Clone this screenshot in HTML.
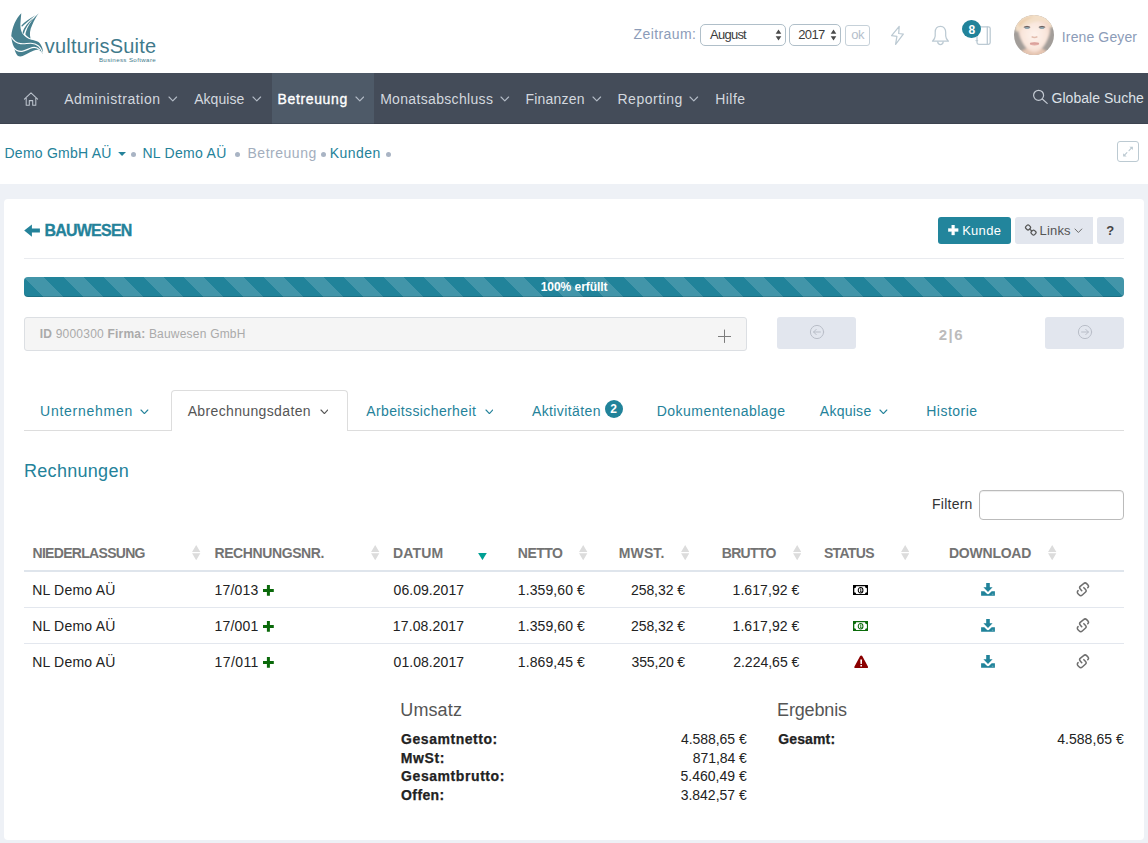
<!DOCTYPE html>
<html lang="de">
<head>
<meta charset="utf-8">
<title>vulturisSuite – Kunden – Bauwesen</title>
<style>
html,body{margin:0;padding:0}
body{width:1148px;height:843px;position:relative;overflow:hidden;background:#eef1f6;
 font-family:"Liberation Sans",sans-serif;font-size:14px;color:#333}
.a{position:absolute}
.t{position:absolute;white-space:pre;line-height:20px}
.t b{font-weight:700}
#top{left:0;top:0;width:1148px;height:73px;background:#fff}
#nav{left:0;top:73px;width:1148px;height:51px;background:#444c59;box-shadow:inset 0 -1px 0 #3c434f}
#navact{left:272px;top:73px;width:102px;height:51px;background:#4e5a68;box-shadow:inset 0 -1px 0 #434d5a}
#crumb{left:0;top:124px;width:1148px;height:60px;background:#fff}
#panel{left:4px;top:199px;width:1140px;height:641px;background:#fff;border-radius:4px}
.dot{position:absolute;width:5px;height:5px;border-radius:50%;background:#a9b4c4;top:152px}
.sel{position:absolute;top:24px;height:22px;box-sizing:border-box;border:1px solid #b0bfc9;border-radius:5px;background:#fff}
.btn{position:absolute;border-radius:3px}
.hr{position:absolute;height:1px;background:#e9ebef}
.sep{position:absolute;left:24px;width:1100px;height:1px;background:#e3e7ee}
</style>
</head>
<body>
<div id="top" class="a"></div>
<div id="nav" class="a"></div>
<div id="navact" class="a"></div>
<div id="crumb" class="a"></div>
<div id="panel" class="a"></div>

<!-- header controls -->
<div class="sel" style="left:699.5px;width:86.5px"></div>
<div class="sel" style="left:789px;width:52px"></div>
<div class="a" style="left:845px;top:25px;width:25px;height:21px;box-sizing:border-box;border:1px solid #c6d1d9;border-radius:3px"></div>

<!-- breadcrumb dots + expand button -->
<div class="dot" style="left:131.3px"></div><div class="dot" style="left:235.2px"></div>
<div class="dot" style="left:321.3px"></div><div class="dot" style="left:385.6px"></div>
<div class="a" style="left:1117px;top:141px;width:22px;height:21px;box-sizing:border-box;border:1px solid #bccad2;border-radius:3px"></div>

<!-- panel header -->
<div class="btn" style="left:938px;top:217px;width:73px;height:27px;background:#22859c"></div>
<div class="btn" style="left:1015px;top:217px;width:78px;height:27px;background:#e2e6ee;border-radius:3px 0 0 3px"></div>
<div class="btn" style="left:1097px;top:217px;width:27px;height:27px;background:#e2e6ee"></div>
<div class="hr" style="left:24px;top:258px;width:1100px"></div>

<!-- progress -->
<div class="a" id="prog" style="left:24px;top:277px;width:1100px;height:20px;border-radius:4px;background-color:#21839a;
 background-image:linear-gradient(45deg,rgba(255,255,255,.15) 25%,transparent 25%,transparent 50%,rgba(255,255,255,.15) 50%,rgba(255,255,255,.15) 75%,transparent 75%,transparent);
 background-size:40px 40px;background-position:0 0;box-shadow:inset 0 -1px 0 rgba(0,0,0,.15)"></div>

<!-- search box + pager -->
<div class="a" style="left:24px;top:317px;width:723px;height:34px;box-sizing:border-box;background:#f5f5f5;border:1px solid #dcdfe3;border-radius:3px"></div>
<div class="btn" style="left:777px;top:317px;width:79px;height:32px;background:#e2e6ee"></div>
<div class="btn" style="left:1045px;top:317px;width:79px;height:32px;background:#e2e6ee"></div>

<!-- tabs -->
<div class="a" style="left:24px;top:430px;width:1100px;height:1px;background:#ddd"></div>
<div class="a" style="left:171px;top:390px;width:177px;height:41px;box-sizing:border-box;border:1px solid #ddd;border-bottom:none;border-radius:4px 4px 0 0;background:#fff"></div>
<div class="a" style="left:605px;top:400px;width:18px;height:18px;border-radius:50%;background:#21839a"></div>

<!-- filter -->
<div class="a" style="left:979px;top:490px;width:145px;height:30px;box-sizing:border-box;border:1px solid #bbb;border-radius:4px;background:#fff;box-shadow:inset 0 1px 1px rgba(0,0,0,.075)"></div>

<!-- table lines -->
<div class="a" style="left:24px;top:570px;width:1100px;height:2px;background:#dfe5ec"></div>
<div class="sep" style="top:607px"></div>
<div class="sep" style="top:643px"></div>

<svg class="a" style="left:10px;top:12px;" width="35" height="46" viewBox="0 0 35 46"><g fill="#47808f"><path d="M11.3 1.3 C5.5 7 2.2 15.5 1.3 23.5 C1.4 28.5 2.6 32.2 3.9 34.8 C4.6 38.4 5.8 41.6 7.4 43.5 C9 44.6 11 44.6 12.6 44 C15.5 43 18 41.2 20.5 40 C23 38.8 25.6 37.6 27.8 37.8 C29.8 38.2 31.4 39.6 32.7 41.8 C33 39 32.8 36.6 31.8 34.8 C30.8 32.2 29.4 30.6 27.5 29.6 C25.6 28.6 23.5 28.2 21.4 27.8 C19.4 27.2 17.6 26.4 16.1 25.2 C13.6 23.4 12 21.4 11.3 19.1 C10.4 16 10.2 13 10.5 10.4 C10.7 7.2 11 4.2 11.3 1.3Z"/><path d="M28.8 1.3 C23.6 6 19.8 11 17.4 16 C16.4 18.4 15.6 20.6 15.4 22.6 C16.8 24.4 18.6 25.8 20.5 26.5 C19.4 22.4 19.8 17.6 22.2 13 C24 8.6 26.2 4.6 28.8 1.3Z"/><path d="M25.4 3.2 C19.6 6.2 14.8 10 11.4 13.4 C11.6 14 11.8 14.4 12 14.8 C15.4 11.6 20 7.4 25.4 3.2Z"/><path d="M23.8 6 C18.2 10 14 15.4 12.6 20.4 C12.9 21 13.3 21.5 13.7 22 C15 17 18.8 11 23.8 6Z"/></g><g fill="none" stroke="#fff" stroke-linecap="round"><path d="M1.6 25.2 C3.6 29 7 31.2 10.6 31.6 C14.4 32 17.6 31.2 20.8 31.3 C24 31.4 26.6 32.4 28.6 34 C30.4 35.6 31.6 37.6 32.4 40.4" stroke-width="1.1"/><path d="M3.6 35.6 C6 38.6 9 39.6 12 39.3 C15.6 38.9 18.6 36.6 22.2 35.7 C25.2 35 27.6 35.8 29.6 37.8" stroke-width="1.2"/></g></svg>
<svg class="a" style="left:774.7px;top:29px;" width="7" height="12" viewBox="0 0 7 12"><path d="M3.5 0.4 L6.3 4.8 H0.7Z M3.5 11.6 L6.3 7.3 H0.7Z" fill="#4a4a4a"/></svg>
<svg class="a" style="left:829.8px;top:29px;" width="7" height="12" viewBox="0 0 7 12"><path d="M3.5 0.4 L6.3 4.8 H0.7Z M3.5 11.6 L6.3 7.3 H0.7Z" fill="#4a4a4a"/></svg>
<svg class="a" style="left:890px;top:25px;" width="16" height="22" viewBox="0 0 16 22"><path d="M9.2 1.4 L1.6 10.7 L6.9 11.4 L5.6 19.4 L13.3 9.1 L8.7 8.5 Z" fill="none" stroke="#bccad3" stroke-width="1.25" stroke-linejoin="round"/></svg>
<svg class="a" style="left:931px;top:25px;" width="19" height="22" viewBox="0 0 19 22"><g fill="none" stroke="#bccad3" stroke-width="1.25" stroke-linejoin="round" stroke-linecap="round"><path d="M9.45 1.4 C6 1.4 4.2 3.8 4.2 7.5 V11 C4.2 13 3 14.6 1.5 16.2 H17.4 C15.9 14.6 14.7 13 14.7 11 V7.5 C14.7 3.8 12.9 1.4 9.45 1.4Z"/><path d="M6.7 16.9 C6.9 18.6 8 19.5 9.45 19.5 C10.9 19.5 12 18.6 12.2 16.9"/></g></svg>
<svg class="a" style="left:974px;top:25px;" width="18" height="21" viewBox="0 0 18 21"><g fill="none" stroke="#bccad3" stroke-width="1.3" stroke-linejoin="round" stroke-linecap="round"><rect x="3" y="1.8" width="13.2" height="17.6" rx="1.8"/><path d="M13.3 1.8 V19.4 M2 15.6 H3.6"/></g></svg>
<div class="a" style="left:962px;top:19.5px;width:19px;height:18.5px;border-radius:50%;background:#21839a"></div>
<svg class="a" style="left:1014px;top:15px;" width="40" height="40" viewBox="0 0 40 40"><defs><clipPath id="avc"><circle cx="20" cy="20" r="20"/></clipPath><filter id="avb" x="-30%" y="-30%" width="160%" height="160%"><feGaussianBlur stdDeviation="1.0"/></filter><filter id="avb2" x="-30%" y="-30%" width="160%" height="160%"><feGaussianBlur stdDeviation="0.55"/></filter><radialGradient id="avf" cx="50%" cy="50%" r="55%"><stop offset="0" stop-color="#fef3ed"/><stop offset="0.7" stop-color="#f9e6dc"/><stop offset="1" stop-color="#f0d3c4"/></radialGradient></defs><g clip-path="url(#avc)"><rect width="40" height="40" fill="#a29d99"/><g filter="url(#avb)"><path d="M-2 -2 H42 V13 C39 11.5 37 11.5 36 13 L4 13 C3 11.5 1 11.5 -2 13Z" fill="#f0dcc6"/><path d="M2 44 C5 37 9 34.5 13 33.5 L27 33.5 C31 34.5 35 37 38 44Z" fill="#e6c6b2"/><path d="M20 3 C30 3 36.4 8 36.2 15 C35.6 21 33 26.5 30 31 C27.5 34.6 24 37.4 20.3 37.4 C16.6 37.4 13 34.6 10.5 31 C7.5 26.5 4.8 21 4.3 15 C4 8 10 3 20 3Z" fill="url(#avf)"/><path d="M1 15 C2 6 9 0 19 -1 C28 -1.5 35 2 38 10 C33 6.5 28 5.5 23 6.5 C16 8 10 10.5 6 15 C4.5 17 3 17.5 1 15Z" fill="#f3dfc8"/><path d="M4 9 C8 4 14 1.5 20 1.5 C14 4 9 7 5.5 12Z" fill="#ebcdab"/></g><g filter="url(#avb2)"><ellipse cx="13.1" cy="12.7" rx="2.7" ry="1.25" fill="#8ea3ad"/><ellipse cx="27.9" cy="12.7" rx="2.7" ry="1.25" fill="#8ea3ad"/><path d="M9.8 12.2 Q13 10.4 16.2 12.2 M24.8 12.2 Q28 10.4 31.2 12.2" stroke="#5e4f4c" stroke-width="0.9" fill="none"/><path d="M17.6 21.6 Q20.5 23.4 23.4 21.6" stroke="#e2bdae" stroke-width="1.4" fill="none"/><ellipse cx="20.5" cy="28.8" rx="4.7" ry="1.7" fill="#e3aca6"/><path d="M16 28.3 Q20.5 29.3 25 28.3" stroke="#cf958f" stroke-width="0.5" fill="none"/></g></g></svg>
<svg class="a" style="left:23px;top:91px;" width="16" height="16" viewBox="0 0 16 16"><path d="M1.4 8.2 L8 1.8 L14.6 8.2 M3.2 7 V14.3 H6.3 V9.6 H9.7 V14.3 H12.8 V7" fill="none" stroke="#bcc3cd" stroke-width="1.05" stroke-linejoin="round" stroke-linecap="round"/></svg>
<svg class="a" style="left:167.95px;top:96.2px;" width="9.6" height="5.8" viewBox="0 0 9.6 5.8"><path d="M1 1 L4.8 4.8 L8.6 1" fill="none" stroke="#b3bbc6" stroke-width="1.15" stroke-linecap="round" stroke-linejoin="round"/></svg>
<svg class="a" style="left:252.45px;top:96.2px;" width="9.6" height="5.8" viewBox="0 0 9.6 5.8"><path d="M1 1 L4.8 4.8 L8.6 1" fill="none" stroke="#b3bbc6" stroke-width="1.15" stroke-linecap="round" stroke-linejoin="round"/></svg>
<svg class="a" style="left:354.7px;top:96.2px;" width="9.6" height="5.8" viewBox="0 0 9.6 5.8"><path d="M1 1 L4.8 4.8 L8.6 1" fill="none" stroke="#b3bbc6" stroke-width="1.15" stroke-linecap="round" stroke-linejoin="round"/></svg>
<svg class="a" style="left:500.45px;top:96.2px;" width="9.6" height="5.8" viewBox="0 0 9.6 5.8"><path d="M1 1 L4.8 4.8 L8.6 1" fill="none" stroke="#b3bbc6" stroke-width="1.15" stroke-linecap="round" stroke-linejoin="round"/></svg>
<svg class="a" style="left:592.45px;top:96.2px;" width="9.6" height="5.8" viewBox="0 0 9.6 5.8"><path d="M1 1 L4.8 4.8 L8.6 1" fill="none" stroke="#b3bbc6" stroke-width="1.15" stroke-linecap="round" stroke-linejoin="round"/></svg>
<svg class="a" style="left:689.2px;top:96.2px;" width="9.6" height="5.8" viewBox="0 0 9.6 5.8"><path d="M1 1 L4.8 4.8 L8.6 1" fill="none" stroke="#b3bbc6" stroke-width="1.15" stroke-linecap="round" stroke-linejoin="round"/></svg>
<svg class="a" style="left:1032px;top:89px;" width="17" height="16" viewBox="0 0 17 16"><g fill="none" stroke="#c3c9d2" stroke-width="1.2" stroke-linecap="round"><circle cx="6.6" cy="6.3" r="5"/><path d="M10.3 10 L15.2 14.4"/></g></svg>
<svg class="a" style="left:118px;top:152px;" width="8" height="4.2" viewBox="0 0 8 4.2"><path d="M0.1 0 H8 L4.05 4Z" fill="#24829a"/></svg>
<svg class="a" style="left:1121px;top:145px;" width="14" height="13" viewBox="0 0 14 13"><g fill="#bccad2" stroke="#bccad2" stroke-width="1.1" stroke-linecap="round"><path d="M8.4 1.7 H11.9 V5.1Z" stroke="none"/><path d="M8 5.6 L10.6 2.9" fill="none"/><path d="M2.1 8.2 V11.5 H5.6Z" stroke="none"/><path d="M3.3 10.4 L5.9 7.7" fill="none"/></g></svg>
<svg class="a" style="left:24px;top:224px;" width="17" height="14" viewBox="0 0 17 14"><path d="M0.2 6.5 L7.9 0.4 V4.6 H15.9 V8.6 H7.9 V12.7 Z" fill="#24829a"/></svg>
<svg class="a" style="left:948px;top:224.8px;" width="11" height="11" viewBox="0 0 11 11"><path d="M3.7 0.1 H6.6 V3.6 H10.2 V6.5 H6.6 V10 H3.7 V6.5 H0.2 V3.6 H3.7Z" fill="#fff" stroke="#fff" stroke-width="0.3" stroke-linejoin="round"/></svg>
<svg class="a" style="left:1024px;top:224px;" width="14" height="12" viewBox="0 0 14 12"><g fill="none" stroke="#555" stroke-width="1.25"><rect x="1.85" y="1.2" width="4.4" height="4.4" rx="1.5" transform="rotate(45 4.05 3.4)"/><rect x="7.33" y="6.42" width="4.4" height="4.4" rx="1.5" transform="rotate(45 9.53 8.62)"/><path d="M5.8 5.1 L7.8 7"/></g></svg>
<svg class="a" style="left:1074.4px;top:227.7px;" width="8.8" height="5.5" viewBox="0 0 8.8 5.5"><path d="M1 1 L4.4 4.5 L7.8 1" fill="none" stroke="#666" stroke-width="0.95" stroke-linecap="round" stroke-linejoin="round"/></svg>
<svg class="a" style="left:717px;top:328px;" width="16" height="16" viewBox="0 0 16 16"><path d="M7.5 1.6 V14.9 M1 8.5 H14" stroke="#7c7c7c" stroke-width="1" fill="none"/></svg>
<svg class="a" style="left:809px;top:324px;" width="16" height="16" viewBox="0 0 16 16"><g fill="none" stroke="#b9bec8" stroke-width="1" stroke-linecap="round" stroke-linejoin="round"><circle cx="8" cy="8" r="6.6"/><path d="M4.6 8 H11.4 M7.2 5.4 L4.6 8 L7.2 10.6"/></g></svg>
<svg class="a" style="left:1076.5px;top:324px;" width="16" height="16" viewBox="0 0 16 16"><g fill="none" stroke="#b9bec8" stroke-width="1" stroke-linecap="round" stroke-linejoin="round"><circle cx="8" cy="8" r="6.6"/><path d="M4.6 8 H11.4 M8.8 5.4 L11.4 8 L8.8 10.6"/></g></svg>
<svg class="a" style="left:140.35px;top:408.6px;" width="8.8" height="5.6" viewBox="0 0 8.8 5.6"><path d="M1 1 L4.4 4.6 L7.8 1" fill="none" stroke="#24829a" stroke-width="1.15" stroke-linecap="round" stroke-linejoin="round"/></svg>
<svg class="a" style="left:319.6px;top:408.6px;" width="8.8" height="5.6" viewBox="0 0 8.8 5.6"><path d="M1 1 L4.4 4.6 L7.8 1" fill="none" stroke="#555" stroke-width="1.15" stroke-linecap="round" stroke-linejoin="round"/></svg>
<svg class="a" style="left:484.6px;top:408.6px;" width="8.8" height="5.6" viewBox="0 0 8.8 5.6"><path d="M1 1 L4.4 4.6 L7.8 1" fill="none" stroke="#24829a" stroke-width="1.15" stroke-linecap="round" stroke-linejoin="round"/></svg>
<svg class="a" style="left:879.1px;top:408.6px;" width="8.8" height="5.6" viewBox="0 0 8.8 5.6"><path d="M1 1 L4.4 4.6 L7.8 1" fill="none" stroke="#24829a" stroke-width="1.15" stroke-linecap="round" stroke-linejoin="round"/></svg>
<svg class="a" style="left:192.25px;top:544.8px;" width="8.4" height="15.4" viewBox="0 0 8.4 15.4"><path d="M4.2 0.1 L8.35 7.1 H0.05Z M4.2 15.3 L8.35 8.2 H0.05Z" fill="#dcdcdc"/></svg>
<svg class="a" style="left:371.2px;top:544.8px;" width="8.4" height="15.4" viewBox="0 0 8.4 15.4"><path d="M4.2 0.1 L8.35 7.1 H0.05Z M4.2 15.3 L8.35 8.2 H0.05Z" fill="#dcdcdc"/></svg>
<svg class="a" style="left:579.2px;top:544.8px;" width="8.4" height="15.4" viewBox="0 0 8.4 15.4"><path d="M4.2 0.1 L8.35 7.1 H0.05Z M4.2 15.3 L8.35 8.2 H0.05Z" fill="#dcdcdc"/></svg>
<svg class="a" style="left:680.5px;top:544.8px;" width="8.4" height="15.4" viewBox="0 0 8.4 15.4"><path d="M4.2 0.1 L8.35 7.1 H0.05Z M4.2 15.3 L8.35 8.2 H0.05Z" fill="#dcdcdc"/></svg>
<svg class="a" style="left:793px;top:544.8px;" width="8.4" height="15.4" viewBox="0 0 8.4 15.4"><path d="M4.2 0.1 L8.35 7.1 H0.05Z M4.2 15.3 L8.35 8.2 H0.05Z" fill="#dcdcdc"/></svg>
<svg class="a" style="left:900.5px;top:544.8px;" width="8.4" height="15.4" viewBox="0 0 8.4 15.4"><path d="M4.2 0.1 L8.35 7.1 H0.05Z M4.2 15.3 L8.35 8.2 H0.05Z" fill="#dcdcdc"/></svg>
<svg class="a" style="left:1048.3px;top:544.8px;" width="8.4" height="15.4" viewBox="0 0 8.4 15.4"><path d="M4.2 0.1 L8.35 7.1 H0.05Z M4.2 15.3 L8.35 8.2 H0.05Z" fill="#dcdcdc"/></svg>
<svg class="a" style="left:478px;top:553px;" width="9" height="7.4" viewBox="0 0 9 7.4"><path d="M0.1 0 H8.8 L4.45 7.1Z" fill="#00a094"/></svg>
<svg class="a" style="left:263px;top:584.6px;" width="11" height="11" viewBox="0 0 11 11"><path d="M3.9 0 H6.9 V3.9 H10.8 V6.9 H6.9 V10.8 H3.9 V6.9 H0 V3.9 H3.9Z" fill="#0a690a"/></svg>
<svg class="a" style="left:263px;top:620.6px;" width="11" height="11" viewBox="0 0 11 11"><path d="M3.9 0 H6.9 V3.9 H10.8 V6.9 H6.9 V10.8 H3.9 V6.9 H0 V3.9 H3.9Z" fill="#0a690a"/></svg>
<svg class="a" style="left:263px;top:656.6px;" width="11" height="11" viewBox="0 0 11 11"><path d="M3.9 0 H6.9 V3.9 H10.8 V6.9 H6.9 V10.8 H3.9 V6.9 H0 V3.9 H3.9Z" fill="#0a690a"/></svg>
<svg class="a" style="left:853px;top:584.8px;" width="15.2" height="10.4" viewBox="0 0 15.2 10.4"><rect width="15.2" height="10.4" fill="#000"/><path d="M3.2 1.3 H12 A1.9 1.9 0 0 0 13.9 3.2 V7.2 A1.9 1.9 0 0 0 12 9.1 H3.2 A1.9 1.9 0 0 0 1.3 7.2 V3.2 A1.9 1.9 0 0 0 3.2 1.3Z" fill="#fff"/><ellipse cx="7.6" cy="5.2" rx="2.35" ry="2.75" fill="#fff" stroke="#000" stroke-width="1.05"/><path d="M7.1 4.2 L7.8 3.8 V6.4 M7.1 6.5 H8.5" stroke="#000" stroke-width="0.85" fill="none"/></svg>
<svg class="a" style="left:853px;top:620.8px;" width="15.2" height="10.4" viewBox="0 0 15.2 10.4"><rect width="15.2" height="10.4" fill="#0b6b0b"/><path d="M3.2 1.3 H12 A1.9 1.9 0 0 0 13.9 3.2 V7.2 A1.9 1.9 0 0 0 12 9.1 H3.2 A1.9 1.9 0 0 0 1.3 7.2 V3.2 A1.9 1.9 0 0 0 3.2 1.3Z" fill="#fff"/><ellipse cx="7.6" cy="5.2" rx="2.35" ry="2.75" fill="#fff" stroke="#0b6b0b" stroke-width="1.05"/><path d="M7.1 4.2 L7.8 3.8 V6.4 M7.1 6.5 H8.5" stroke="#0b6b0b" stroke-width="0.85" fill="none"/></svg>
<svg class="a" style="left:853.5px;top:654.7px;" width="14.4" height="13.6" viewBox="0 0 14.4 13.6"><path d="M7.2 0.5 C7.7 0.5 8.1 0.8 8.4 1.3 L13.9 11.5 C14.4 12.4 13.8 13.3 12.8 13.3 H1.6 C0.6 13.3 0 12.4 0.5 11.5 L6 1.3 C6.3 0.8 6.7 0.5 7.2 0.5Z" fill="#8b0000"/><path d="M6.3 4.6 H8.1 L7.9 8.9 H6.5Z M6.4 9.9 H8 V11.5 H6.4Z" fill="#fff"/></svg>
<svg class="a" style="left:981px;top:582.6px;" width="14" height="13" viewBox="0 0 14 13"><path d="M5.2 0.1 H8.8 V4.3 H11.6 L7 8.9 L2.4 4.3 H5.2Z" fill="#21839a"/><path d="M0.1 8.3 H3.3 L5.6 10.6 C6.4 11.3 7.6 11.3 8.4 10.6 L10.7 8.3 H13.9 V12.7 H0.1Z" fill="#21839a"/><rect x="10.8" y="10.8" width="1.6" height="0.7" fill="#fff" opacity=".55"/></svg>
<svg class="a" style="left:981px;top:618.6px;" width="14" height="13" viewBox="0 0 14 13"><path d="M5.2 0.1 H8.8 V4.3 H11.6 L7 8.9 L2.4 4.3 H5.2Z" fill="#21839a"/><path d="M0.1 8.3 H3.3 L5.6 10.6 C6.4 11.3 7.6 11.3 8.4 10.6 L10.7 8.3 H13.9 V12.7 H0.1Z" fill="#21839a"/><rect x="10.8" y="10.8" width="1.6" height="0.7" fill="#fff" opacity=".55"/></svg>
<svg class="a" style="left:981px;top:654.6px;" width="14" height="13" viewBox="0 0 14 13"><path d="M5.2 0.1 H8.8 V4.3 H11.6 L7 8.9 L2.4 4.3 H5.2Z" fill="#21839a"/><path d="M0.1 8.3 H3.3 L5.6 10.6 C6.4 11.3 7.6 11.3 8.4 10.6 L10.7 8.3 H13.9 V12.7 H0.1Z" fill="#21839a"/><rect x="10.8" y="10.8" width="1.6" height="0.7" fill="#fff" opacity=".55"/></svg>
<svg class="a" style="left:1076px;top:581.6px;" width="14" height="15" viewBox="0 0 14 15"><g fill="none" stroke="#6e6e6e" stroke-width="1.5" stroke-linecap="round" stroke-linejoin="round"><path d="M5.75 8.67 L4.2 6.9 C3.4 6 3.4 5.2 4.2 4.4 L7.6 1.6 C8.6 0.7 9.7 0.7 10.6 1.6 L11.9 2.9 C12.7 3.8 12.7 4.9 11.75 5.8"/><path d="M7.84 5.67 L9.6 7.5 C10.4 8.4 10.4 9.3 9.6 10 L6.3 13 C5.3 13.9 4.2 13.9 3.3 13 L2 11.7 C1.1 10.8 1.1 9.6 2.1 8.67"/></g></svg>
<svg class="a" style="left:1076px;top:617.6px;" width="14" height="15" viewBox="0 0 14 15"><g fill="none" stroke="#6e6e6e" stroke-width="1.5" stroke-linecap="round" stroke-linejoin="round"><path d="M5.75 8.67 L4.2 6.9 C3.4 6 3.4 5.2 4.2 4.4 L7.6 1.6 C8.6 0.7 9.7 0.7 10.6 1.6 L11.9 2.9 C12.7 3.8 12.7 4.9 11.75 5.8"/><path d="M7.84 5.67 L9.6 7.5 C10.4 8.4 10.4 9.3 9.6 10 L6.3 13 C5.3 13.9 4.2 13.9 3.3 13 L2 11.7 C1.1 10.8 1.1 9.6 2.1 8.67"/></g></svg>
<svg class="a" style="left:1076px;top:653.6px;" width="14" height="15" viewBox="0 0 14 15"><g fill="none" stroke="#6e6e6e" stroke-width="1.5" stroke-linecap="round" stroke-linejoin="round"><path d="M5.75 8.67 L4.2 6.9 C3.4 6 3.4 5.2 4.2 4.4 L7.6 1.6 C8.6 0.7 9.7 0.7 10.6 1.6 L11.9 2.9 C12.7 3.8 12.7 4.9 11.75 5.8"/><path d="M7.84 5.67 L9.6 7.5 C10.4 8.4 10.4 9.3 9.6 10 L6.3 13 C5.3 13.9 4.2 13.9 3.3 13 L2 11.7 C1.1 10.8 1.1 9.6 2.1 8.67"/></g></svg>
<div class="t" style="left:633.61px;top:24.40px;font-size:14px;color:#8c9cb8;letter-spacing:0.402px">Zeitraum:</div>
<div class="t" style="left:710.10px;top:24.90px;font-size:13px;color:#3c3c3c;letter-spacing:-0.768px">August</div>
<div class="t" style="left:798.21px;top:24.90px;font-size:13px;color:#3c3c3c;letter-spacing:-0.608px">2017</div>
<div class="t" style="left:851.30px;top:25.20px;font-size:13px;color:#b4c0cc;letter-spacing:-0.504px">ok</div>
<div class="t" style="left:1061.86px;top:26.95px;font-size:14px;color:#8c9cb8;letter-spacing:0.119px">Irene Geyer</div>
<div class="t" style="left:64.13px;top:89.40px;font-size:14px;color:#d3d8df;letter-spacing:0.556px">Administration</div>
<div class="t" style="left:194.13px;top:89.40px;font-size:14px;color:#d3d8df;letter-spacing:0.059px">Akquise</div>
<div class="t" style="left:380.14px;top:89.40px;font-size:14px;color:#d3d8df;letter-spacing:0.330px">Monatsabschluss</div>
<div class="t" style="left:525.49px;top:89.40px;font-size:14px;color:#d3d8df;letter-spacing:0.211px">Finanzen</div>
<div class="t" style="left:617.49px;top:89.40px;font-size:14px;color:#d3d8df;letter-spacing:0.517px">Reporting</div>
<div class="t" style="left:715.14px;top:89.40px;font-size:14px;color:#d3d8df;letter-spacing:0.489px">Hilfe</div>
<div class="t" style="left:277.54px;top:89.40px;font-size:14px;color:#ffffff;letter-spacing:0.638px;-webkit-text-stroke:0.35px #fff">Betreuung</div>
<div class="t" style="left:1051.54px;top:87.75px;font-size:14px;color:#dde1e7;letter-spacing:0.040px">Globale Suche</div>
<div class="t" style="left:4.53px;top:143.15px;font-size:14px;color:#24829a;letter-spacing:0.242px">Demo GmbH AÜ</div>
<div class="t" style="left:142.44px;top:143.15px;font-size:14px;color:#24829a;letter-spacing:0.297px">NL Demo AÜ</div>
<div class="t" style="left:247.46px;top:143.15px;font-size:14px;color:#a3aebd;letter-spacing:0.525px">Betreuung</div>
<div class="t" style="left:329.79px;top:143.15px;font-size:14px;color:#24829a;letter-spacing:0.464px">Kunden</div>
<div class="t" style="left:44.54px;top:221.36px;font-size:16px;color:#24829a;letter-spacing:-0.793px;font-weight:700;-webkit-text-stroke:0.3px #24829a">BAUWESEN</div>
<div class="t" style="left:962.15px;top:220.80px;font-size:13px;color:#fff;letter-spacing:0.290px">Kunde</div>
<div class="t" style="left:1039.60px;top:220.80px;font-size:13px;color:#555;letter-spacing:0.156px">Links</div>
<div class="t" style="left:1106.22px;top:220.80px;font-size:13px;color:#444;letter-spacing:0.000px;font-weight:700">?</div>
<div class="t" style="left:540.66px;top:276.74px;font-size:12px;color:#fff;letter-spacing:-0.036px;font-weight:700">100% erfüllt</div>
<div class="t" style="left:39.77px;top:324.09px;font-size:12px;color:#aaaaaa;letter-spacing:0.206px"><b>ID</b> 9000300 <b>Firma:</b> Bauwesen GmbH</div>
<div class="t" style="left:938.75px;top:325.20px;font-size:15px;color:#bcbcbc;letter-spacing:1.483px;font-weight:700">2|6</div>
<div class="t" style="left:40.10px;top:401.40px;font-size:14px;color:#24829a;letter-spacing:0.736px">Unternehmen</div>
<div class="t" style="left:187.68px;top:401.40px;font-size:14px;color:#555;letter-spacing:0.358px">Abrechnungsdaten</div>
<div class="t" style="left:366.23px;top:401.40px;font-size:14px;color:#24829a;letter-spacing:0.383px">Arbeitssicherheit</div>
<div class="t" style="left:531.92px;top:401.40px;font-size:14px;color:#24829a;letter-spacing:0.395px">Aktivitäten</div>
<div class="t" style="left:656.72px;top:401.40px;font-size:14px;color:#24829a;letter-spacing:0.466px">Dokumentenablage</div>
<div class="t" style="left:819.85px;top:401.40px;font-size:14px;color:#24829a;letter-spacing:0.252px">Akquise</div>
<div class="t" style="left:926.23px;top:401.40px;font-size:14px;color:#24829a;letter-spacing:0.486px">Historie</div>
<div class="t" style="left:610.16px;top:398.94px;font-size:12px;color:#fff;letter-spacing:0.000px;font-weight:700">2</div>
<div class="t" style="left:968.46px;top:19.64px;font-size:12px;color:#fff;letter-spacing:0.000px;font-weight:700">8</div>
<div class="t" style="left:23.99px;top:460.66px;font-size:18px;color:#24829a;letter-spacing:0.294px">Rechnungen</div>
<div class="t" style="left:932.07px;top:493.85px;font-size:14px;color:#333;letter-spacing:0.241px">Filtern</div>
<div class="t" style="left:32.48px;top:543.15px;font-size:14px;color:#737373;letter-spacing:-0.693px;font-weight:700">NIEDERLASSUNG</div>
<div class="t" style="left:214.48px;top:543.15px;font-size:14px;color:#737373;letter-spacing:-0.401px;font-weight:700">RECHNUNGSNR.</div>
<div class="t" style="left:393.03px;top:543.15px;font-size:14px;color:#737373;letter-spacing:0.186px;font-weight:700">DATUM</div>
<div class="t" style="left:517.75px;top:543.15px;font-size:14px;color:#737373;letter-spacing:-0.483px;font-weight:700">NETTO</div>
<div class="t" style="left:618.73px;top:543.15px;font-size:14px;color:#737373;letter-spacing:0.143px;font-weight:700">MWST.</div>
<div class="t" style="left:721.75px;top:543.15px;font-size:14px;color:#737373;letter-spacing:-0.686px;font-weight:700">BRUTTO</div>
<div class="t" style="left:823.89px;top:543.15px;font-size:14px;color:#737373;letter-spacing:-0.645px;font-weight:700">STATUS</div>
<div class="t" style="left:948.97px;top:543.15px;font-size:14px;color:#737373;letter-spacing:-0.229px;font-weight:700">DOWNLOAD</div>
<div class="t" style="left:32.13px;top:580.15px;font-size:14px;color:#222;letter-spacing:0.230px">NL Demo AÜ</div>
<div class="t" style="left:214.54px;top:580.15px;font-size:14px;color:#222;letter-spacing:0.184px">17/013</div>
<div class="t" style="left:393.61px;top:580.15px;font-size:14px;color:#222;letter-spacing:0.039px">06.09.2017</div>
<div class="t" style="left:517.84px;top:580.15px;font-size:14px;color:#222;letter-spacing:0.090px">1.359,60 €</div>
<div class="t" style="left:630.92px;top:580.15px;font-size:14px;color:#222;letter-spacing:-0.049px">258,32 €</div>
<div class="t" style="left:732.54px;top:580.15px;font-size:14px;color:#222;letter-spacing:0.074px">1.617,92 €</div>
<div class="t" style="left:32.13px;top:616.15px;font-size:14px;color:#222;letter-spacing:0.230px">NL Demo AÜ</div>
<div class="t" style="left:214.54px;top:616.15px;font-size:14px;color:#222;letter-spacing:0.195px">17/001</div>
<div class="t" style="left:392.84px;top:616.15px;font-size:14px;color:#222;letter-spacing:0.125px">17.08.2017</div>
<div class="t" style="left:517.84px;top:616.15px;font-size:14px;color:#222;letter-spacing:0.090px">1.359,60 €</div>
<div class="t" style="left:630.92px;top:616.15px;font-size:14px;color:#222;letter-spacing:-0.049px">258,32 €</div>
<div class="t" style="left:732.54px;top:616.15px;font-size:14px;color:#222;letter-spacing:0.074px">1.617,92 €</div>
<div class="t" style="left:32.13px;top:652.15px;font-size:14px;color:#222;letter-spacing:0.230px">NL Demo AÜ</div>
<div class="t" style="left:214.54px;top:652.15px;font-size:14px;color:#222;letter-spacing:0.404px">17/011</div>
<div class="t" style="left:393.61px;top:652.15px;font-size:14px;color:#222;letter-spacing:0.039px">01.08.2017</div>
<div class="t" style="left:517.84px;top:652.15px;font-size:14px;color:#222;letter-spacing:0.090px">1.869,45 €</div>
<div class="t" style="left:631.54px;top:652.15px;font-size:14px;color:#222;letter-spacing:-0.137px">355,20 €</div>
<div class="t" style="left:733.17px;top:652.15px;font-size:14px;color:#222;letter-spacing:0.004px">2.224,65 €</div>
<div class="t" style="left:400.28px;top:700.01px;font-size:18px;color:#555;letter-spacing:0.121px">Umsatz</div>
<div class="t" style="left:777.11px;top:700.01px;font-size:18px;color:#555;letter-spacing:-0.171px">Ergebnis</div>
<div class="t" style="left:401.07px;top:728.90px;font-size:14px;color:#222;letter-spacing:0.539px;font-weight:700;-webkit-text-stroke:0.25px #222">Gesamtnetto:</div>
<div class="t" style="left:400.72px;top:747.65px;font-size:14px;color:#222;letter-spacing:0.613px;font-weight:700;-webkit-text-stroke:0.25px #222">MwSt:</div>
<div class="t" style="left:401.07px;top:766.40px;font-size:14px;color:#222;letter-spacing:0.573px;font-weight:700;-webkit-text-stroke:0.25px #222">Gesamtbrutto:</div>
<div class="t" style="left:401.07px;top:785.15px;font-size:14px;color:#222;letter-spacing:0.388px;font-weight:700;-webkit-text-stroke:0.25px #222">Offen:</div>
<div class="t" style="left:680.96px;top:728.90px;font-size:14px;color:#222;letter-spacing:-0.043px">4.588,65 €</div>
<div class="t" style="left:692.71px;top:747.65px;font-size:14px;color:#222;letter-spacing:-0.056px">871,84 €</div>
<div class="t" style="left:680.43px;top:766.40px;font-size:14px;color:#222;letter-spacing:0.024px">5.460,49 €</div>
<div class="t" style="left:680.68px;top:785.15px;font-size:14px;color:#222;letter-spacing:-0.012px">3.842,57 €</div>
<div class="t" style="left:778.24px;top:728.90px;font-size:14px;color:#222;letter-spacing:0.138px;font-weight:700;-webkit-text-stroke:0.25px #222">Gesamt:</div>
<div class="t" style="left:1057.16px;top:728.90px;font-size:14px;color:#222;letter-spacing:0.054px">4.588,65 €</div>
<div class="t" style="left:44.70px;top:36.27px;font-size:20px;color:#3f7a8b;letter-spacing:0.212px">vulturisSuite</div>
<div class="t" style="left:98.90px;top:50.15px;font-size:6.2px;color:#3f7a8b;letter-spacing:0.352px">Business Software</div>
</body>
</html>
